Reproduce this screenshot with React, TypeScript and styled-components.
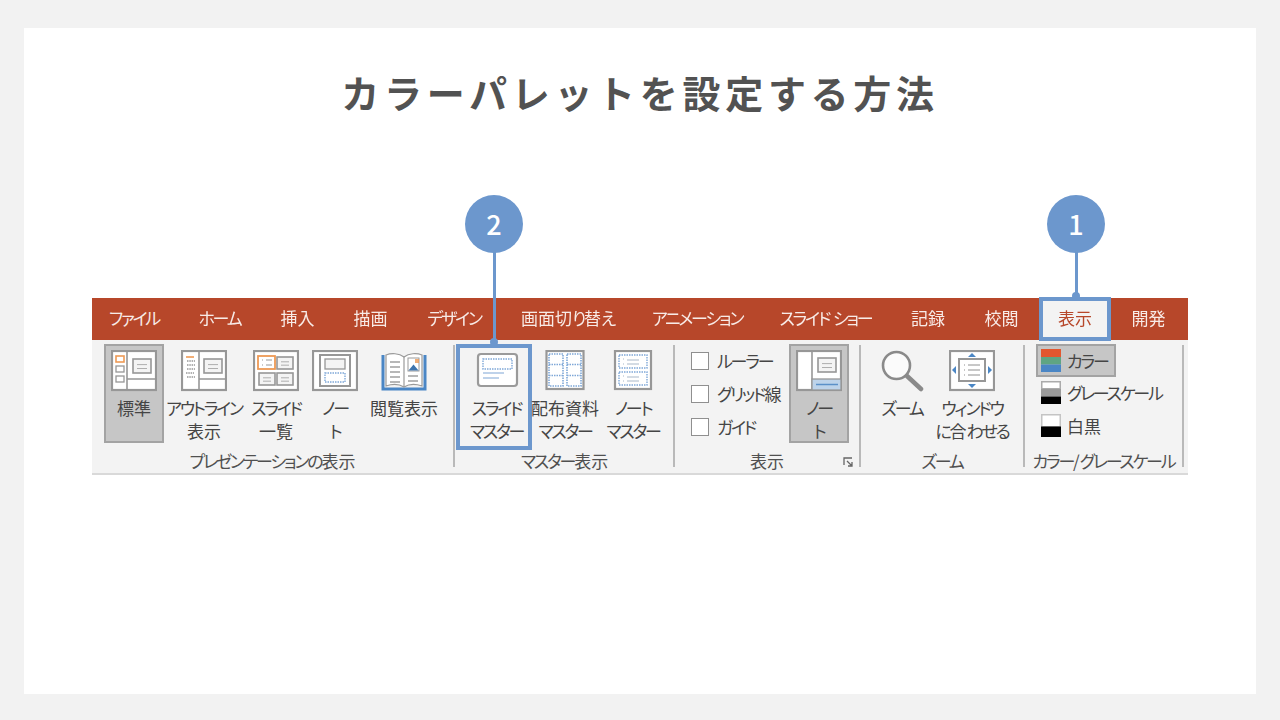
import React from "react";
import styled, { createGlobalStyle } from "styled-components";

const FONT = `"Noto Sans CJK JP", "Noto Sans", sans-serif`;
const BLUE = "#6c97cd";
const GRAY = "#979797";
const DOT = "#7fa8d8";
const ORANGE = "#ee9a55";

const Global = createGlobalStyle`
  html, body { margin: 0; padding: 0; background: #f2f2f2; }
  * { box-sizing: border-box; }
`;

const Page = styled.div`
  width: 1280px;
  height: 720px;
  padding: 28px 24px 26px;
  font-family: ${FONT};
`;
const Card = styled.main`
  height: 666px;
  background: #fff;
  padding: 39px 68px 0;
`;
const Title = styled.h1`
  margin: 0 0 181px;
  height: 50px;
  line-height: 50px;
  text-align: center;
  font-size: 38px;
  font-weight: 700;
  letter-spacing: 4.7px;
  color: #525252;
`;
const RibbonWrap = styled.section`
  position: relative;
  width: 1096px;
  font-feature-settings: "palt";
  color: #454545;
`;
const Blurred = styled.div`
  filter: blur(0.5px);
`;
const TabBar = styled.nav`
  display: flex;
  gap: 4px;
  height: 42px;
  background: #b7472a;
`;
const Tab = styled.div<{ $w: number; $active?: boolean }>`
  position: relative;
  z-index: 1;
  width: ${(p) => p.$w + 34}px;
  flex: none;
  height: 42px;
  line-height: 40px;
  font-size: 17px;
  text-align: center;
  white-space: nowrap;
  color: ${(p) => (p.$active ? "#b7472a" : "#f8ebe7")};
  background: ${(p) => (p.$active ? "#f3f3f3" : "transparent")};
  box-shadow: ${(p) => (p.$active ? `inset 0 0 0 3px ${BLUE}, 0 0 0 1px ${BLUE}` : "none")};
`;
const Kana = styled.span`
  letter-spacing: -2.2px;
`;
const Ribbon = styled.div`
  display: flex;
  height: 135px;
  padding-top: 4px;
  background: #f3f3f3;
  border-bottom: 2px solid #d9d9d9;
`;
const Group = styled.div<{ $w: number; $pl?: number }>`
  position: relative;
  width: ${(p) => p.$w}px;
  padding-left: ${(p) => p.$pl ?? 0}px;
  display: flex;
  flex-direction: column;
`;
const Row = styled.div`
  display: flex;
  height: 106px;
`;
const GroupLabel = styled.div<{ $ml?: number }>`
  height: 22px;
  line-height: 22px;
  margin-left: ${(p) => p.$ml ?? 0}px;
  font-size: 17px;
  text-align: center;
  white-space: nowrap;
  color: #505050;
`;
const Sep = styled.div`
  width: 2px;
  height: 122px;
  margin-top: 1px;
  background: #b9b9b9;
  flex: none;
`;
const BigButton = styled.div<{ $w: number; $active?: boolean; $marked?: boolean }>`
  width: ${(p) => p.$w}px;
  height: ${(p) => (p.$marked ? 106 : 99)}px;
  flex: none;
  display: flex;
  flex-direction: column;
  align-items: center;
  border: 2px solid ${(p) => (p.$marked ? BLUE : p.$active ? "#a3a3a3" : "transparent")};
  background: ${(p) => (p.$active ? "#c6c6c6" : "transparent")};
  padding-left: ${(p) => (p.$marked ? 5 : 0)}px;
  box-shadow: ${(p) => (p.$marked ? `inset 0 0 0 2px ${BLUE}` : "none")};
`;
const IconSlot = styled.div`
  height: 50px;
  padding-top: 4px;
  flex: none;
`;
const BigText = styled.div`
  font-size: 17px;
  line-height: 23px;
  text-align: center;
  white-space: pre;
`;
const CheckColumn = styled.div`
  width: 98px;
  flex: none;
`;
const CheckRow = styled.div`
  height: 33px;
  display: flex;
  align-items: center;
  gap: 8px;
  font-size: 17px;
  white-space: nowrap;
`;
const CheckBox = styled.span`
  width: 18px;
  height: 18px;
  background: #fff;
  border: 1.5px solid #8f8f8f;
  flex: none;
`;
const Launcher = styled.svg`
  position: absolute;
  right: 5px;
  bottom: 5px;
`;
const ColorRow = styled.div<{ $active?: boolean }>`
  width: 80px;
  height: 32.5px;
  display: flex;
  align-items: center;
  gap: 6px;
  padding-left: 3px;
  font-size: 17px;
  white-space: nowrap;
  border: 2px solid ${(p) => (p.$active ? "#a3a3a3" : "transparent")};
  background: ${(p) => (p.$active ? "#c6c6c6" : "transparent")};
`;
const ColorColumn = styled.div`
  display: flex;
  flex-direction: column;
`;
const Swatch = styled.svg`
  flex: none;
`;
const Pin = styled.div<{ $x: number; $stem: number }>`
  position: absolute;
  z-index: 2;
  left: ${(p) => p.$x}px;
  top: -103px;
  width: 58px;
  height: ${(p) => 57 + p.$stem}px;
  transform: translateX(-50%);
  &::before {
    content: "";
    position: absolute;
    left: 27.5px;
    top: 50px;
    width: 3px;
    height: ${(p) => p.$stem + 7}px;
    background: ${BLUE};
  }
  &::after {
    content: "";
    position: absolute;
    left: 25px;
    bottom: -2px;
    width: 8px;
    height: 8px;
    border-radius: 50%;
    background: ${BLUE};
  }
`;
const PinBadge = styled.div`
  position: relative;
  width: 58px;
  height: 58px;
  border-radius: 50%;
  background: ${BLUE};
  color: #fff;
  font-size: 27px;
  font-weight: 500;
  line-height: 58px;
  text-align: center;
  font-feature-settings: normal;
`;

const K = ({ t }: { t: string }) => (
  <>
    {t.split(/([ァ-ヶーぁ-ん]+)/).map((s, i) => (i % 2 ? <Kana key={i}>{s}</Kana> : s))}
  </>
);

const Ic = ({ children }: { children: React.ReactNode }) => (
  <svg width="46" height="42" viewBox="0 0 46 42" fill="none">{children}</svg>
);
const Frame = () => <rect x="1" y="1" width="44" height="39" fill="#fff" stroke={GRAY} strokeWidth="2.2" />;
const MiniSlide = ({ x, y, w = 18, h = 14 }: { x: number; y: number; w?: number; h?: number }) => (
  <g stroke={GRAY}>
    <rect x={x} y={y} width={w} height={h} fill="#f4f4f4" strokeWidth="1.6" />
    <path d={`M${x + 4} ${y + h * 0.4}h${w - 8}M${x + 4} ${y + h * 0.68}h${w - 8}`} strokeWidth="1" opacity=".75" />
  </g>
);
const NormalIcon = () => (
  <Ic>
    <Frame />
    <path d="M16 1v39M16 29h29" stroke={GRAY} strokeWidth="1.6" />
    <rect x="5" y="6" width="8" height="6" stroke={ORANGE} strokeWidth="1.6" />
    <rect x="5" y="16" width="8" height="6" stroke={GRAY} strokeWidth="1.3" />
    <rect x="5" y="26" width="8" height="6" stroke={GRAY} strokeWidth="1.3" />
    <MiniSlide x={22} y={9} />
  </Ic>
);
const OutlineIcon = () => (
  <Ic>
    <Frame />
    <path d="M18 1v39M18 29h27" stroke={GRAY} strokeWidth="1.6" />
    <path d="M5 7h8" stroke={ORANGE} strokeWidth="1.6" />
    <path d="M6 11h8M6 15h8M6 19h8M5 23h8M6 27h8" stroke={GRAY} strokeWidth="1.3" strokeDasharray="1.5 .8" />
    <MiniSlide x={23} y={9} />
  </Ic>
);
const SorterIcon = () => (
  <Ic>
    <Frame />
    <MiniSlide x={24} y={7} w={16} h={12} />
    <MiniSlide x={6} y={23} w={16} h={12} />
    <MiniSlide x={24} y={23} w={16} h={12} />
    <rect x="5" y="6" width="17" height="13" fill="#fff" stroke={ORANGE} strokeWidth="1.8" />
    <path d="M9 10h1M9 15h1M13 10h6M13 15h6" stroke={GRAY} strokeWidth="1" />
  </Ic>
);
const NotesIcon = () => (
  <Ic>
    <Frame />
    <rect x="8" y="5" width="30" height="31" stroke={GRAY} strokeWidth="2" />
    <rect x="13" y="9" width="20" height="10" fill="#f4f4f4" stroke={GRAY} strokeWidth="1.3" />
    <rect x="13" y="23" width="20" height="9" stroke={DOT} strokeWidth="1.4" strokeDasharray="1.5 1" />
  </Ic>
);
const ReadingIcon = () => (
  <Ic>
    <path d="M2 5v34h42V5" stroke="#4a86c5" strokeWidth="3" />
    <path d="M23 7C18 3 10 3 5 5v31c6-2 13-2 18 1 5-3 12-3 18-1V5c-5-2-13-2-18 2Z" fill="#fff" stroke="#9a9a9a" strokeWidth="1.2" />
    <path d="M23 7v30" stroke="#9a9a9a" strokeWidth="1.2" />
    <path d="M9 12h10M9 17h10M9 22h10M9 27h10M9 32h10M27 26h10M27 31h10" stroke="#a0a0a0" strokeWidth="1.3" />
    <rect x="27" y="8" width="11" height="13" fill="#fff" stroke="#9a9a9a" />
    <path d="M27.5 20.5l5-6 5 6Z" fill="#3e74ad" />
    <path d="M34 9h4v4h-4Z" fill={ORANGE} opacity=".8" />
  </Ic>
);
const SlideMasterIcon = () => (
  <Ic>
    <rect x="4" y="4" width="39" height="32" rx="3" fill="#fff" stroke="#9a9a9a" strokeWidth="2.2" />
    <rect x="9" y="9" width="29" height="10" stroke={DOT} strokeWidth="1.4" strokeDasharray="1.5 1" />
    <path d="M9 23h21M9 28h16" stroke="#a9c4e4" strokeWidth="1.6" />
  </Ic>
);
const HandoutIcon = () => (
  <Ic>
    <rect x="4.500" y="1" width="37" height="38" fill="#fff" stroke={GRAY} strokeWidth="2.2" />
    <path
      d="M7 4h14v32H7ZM25 4h14v32H25ZM7 14.500h14M7 25.500h14M25 14.500h14M25 25.500h14"
      stroke={DOT}
      strokeWidth="1.6"
      strokeDasharray="1.5 1"
    />
  </Ic>
);
const NotesMasterIcon = () => (
  <Ic>
    <rect x="5" y="1" width="36" height="38" fill="#fff" stroke={GRAY} strokeWidth="2.2" />
    <rect x="9" y="5" width="28" height="13" stroke={DOT} strokeWidth="1.4" strokeDasharray="1.5 1" />
    <rect x="9" y="22" width="28" height="13" stroke={DOT} strokeWidth="1.4" strokeDasharray="1.5 1" />
    <path d="M13 9h1M17 10h12M13 14h1M17 14h12M13 26h1M17 27h12M13 31h1M17 31h12" stroke="#a9b8c9" strokeWidth="1" />
  </Ic>
);
const NoteViewIcon = () => (
  <Ic>
    <Frame />
    <path d="M16 1v39" stroke={GRAY} strokeWidth="1.6" />
    <rect x="16" y="29" width="29" height="11" fill="#bdd3ea" stroke={GRAY} strokeWidth="1.3" />
    <path d="M20 34.500h22" stroke="#5b90c8" strokeWidth="1.5" />
    <MiniSlide x={22} y={8} />
  </Ic>
);
const ZoomIcon = () => (
  <Ic>
    <circle cx="17.500" cy="15.500" r="13.500" fill="#fbfbfb" stroke="#8a8a8a" strokeWidth="2.6" />
    <path d="M28 26l14 13" stroke="#8a8a8a" strokeWidth="4.500" strokeLinecap="round" />
  </Ic>
);
const FitIcon = () => (
  <Ic>
    <Frame />
    <rect x="10" y="9" width="26" height="22" fill="#fff" stroke={GRAY} strokeWidth="2" />
    <path d="M15 15h1M19 15h12M15 20h1M19 20h12M15 25h1M19 25h12" stroke="#909090" strokeWidth="1" />
    <path d="M23 3l4 4h-8ZM23 38l4-4h-8ZM3 20l4-4v8ZM43 20l-4-4v8Z" fill="#4a86c5" />
  </Ic>
);
const ColorSwatch = () => (
  <Swatch width="20" height="23" viewBox="0 0 20 23">
    <rect width="20" height="8" fill="#e2572f" />
    <rect y="8" width="20" height="7.500" fill="#5fa583" />
    <rect y="15.500" width="20" height="7.500" fill="#4a86c5" />
  </Swatch>
);
const GraySwatch = () => (
  <Swatch width="20" height="23" viewBox="0 0 20 23">
    <rect x=".75" y=".75" width="18.500" height="7" fill="#fff" stroke="#ababab" strokeWidth="1.500" />
    <rect y="8" width="20" height="7.500" fill="#9a9a9a" />
    <rect y="15.500" width="20" height="7.500" fill="#000" />
  </Swatch>
);
const MonoSwatch = () => (
  <Swatch width="20" height="23" viewBox="0 0 20 23">
    <rect x=".75" y=".75" width="18.500" height="12" fill="#fff" stroke="#c4c4c4" strokeWidth="1.500" />
    <rect y="12.500" width="20" height="10.500" fill="#000" />
  </Swatch>
);

const tabs: [string, number][] = [
  ["ファイル", 50], ["ホーム", 45], ["挿入", 35], ["描画", 35], ["デザイン", 56], ["画面切り替え", 95],
  ["アニメーション", 88], ["スライド ショー", 93], ["記録", 36], ["校閲", 35], ["表示", 36], ["開発", 35],
];

export default function App() {
  return (
    <Page>
      <Global />
      <Card>
        <Title>カラーパレットを設定する方法</Title>
        <RibbonWrap>
          <Blurred>
            <TabBar>
              {tabs.map(([t, w]) => (
                <Tab key={t} $w={w} $active={t === "表示"}><K t={t} /></Tab>
              ))}
            </TabBar>
            <Ribbon>
              <Group $w={361} $pl={12}>
                <Row>
                  <BigButton $w={60} $active><IconSlot><NormalIcon /></IconSlot><BigText>標準</BigText></BigButton>
                  <BigButton $w={80}><IconSlot><OutlineIcon /></IconSlot><BigText><K t={"アウトライン\n表示"} /></BigText></BigButton>
                  <BigButton $w={64}><IconSlot><SorterIcon /></IconSlot><BigText><K t={"スライド\n一覧"} /></BigText></BigButton>
                  <BigButton $w={54}><IconSlot><NotesIcon /></IconSlot><BigText><K t={"ノー\nト"} /></BigText></BigButton>
                  <BigButton $w={84}><IconSlot><ReadingIcon /></IconSlot><BigText>閲覧表示</BigText></BigButton>
                </Row>
                <GroupLabel $ml={-12}><K t="プレゼンテーションの表示" /></GroupLabel>
              </Group>
              <Sep />
              <Group $w={218} $pl={1}>
                <Row>
                  <BigButton $w={76} $marked><IconSlot><SlideMasterIcon /></IconSlot><BigText><K t={"スライド\nマスター"} /></BigText></BigButton>
                  <BigButton $w={66}><IconSlot><HandoutIcon /></IconSlot><BigText><K t={"配布資料\nマスター"} /></BigText></BigButton>
                  <BigButton $w={70}><IconSlot><NotesMasterIcon /></IconSlot><BigText><K t={"ノート\nマスター"} /></BigText></BigButton>
                </Row>
                <GroupLabel><K t="マスター表示" /></GroupLabel>
              </Group>
              <Sep />
              <Group $w={184} $pl={16}>
                <Row>
                  <CheckColumn>
                    <CheckRow><CheckBox /><span><K t="ルーラー" /></span></CheckRow>
                    <CheckRow><CheckBox /><span><K t="グリッド線" /></span></CheckRow>
                    <CheckRow><CheckBox /><span><K t="ガイド" /></span></CheckRow>
                  </CheckColumn>
                  <BigButton $w={60} $active><IconSlot><NoteViewIcon /></IconSlot><BigText><K t={"ノー\nト"} /></BigText></BigButton>
                </Row>
                <GroupLabel $ml={-16}>表示</GroupLabel>
                <Launcher width="11" height="11" viewBox="0 0 11 11" fill="none">
                  <path d="M1 8V1h8M4 4l5 5M9 5v4H5" stroke="#666" strokeWidth="1.3" />
                </Launcher>
              </Group>
              <Sep />
              <Group $w={162}>
                <Row>
                  <BigButton $w={82}><IconSlot><ZoomIcon /></IconSlot><BigText><K t="ズーム" /></BigText></BigButton>
                  <BigButton $w={58}><IconSlot><FitIcon /></IconSlot><BigText><K t={"ウィンドウ\nに合わせる"} /></BigText></BigButton>
                </Row>
                <GroupLabel><K t="ズーム" /></GroupLabel>
              </Group>
              <Sep />
              <Group $w={157} $pl={11}>
                <Row>
                  <ColorColumn>
                    <ColorRow $active><ColorSwatch /><span><K t="カラー" /></span></ColorRow>
                    <ColorRow><GraySwatch /><span><K t="グレースケール" /></span></ColorRow>
                    <ColorRow><MonoSwatch />白黒</ColorRow>
                  </ColorColumn>
                </Row>
                <GroupLabel $ml={-11}><K t="カラー/グレースケール" /></GroupLabel>
              </Group>
              <Sep />
            </Ribbon>
          </Blurred>
          <Pin $x={402} $stem={46 + 46}><PinBadge>2</PinBadge></Pin>
          <Pin $x={984} $stem={46}><PinBadge>1</PinBadge></Pin>
        </RibbonWrap>
      </Card>
    </Page>
  );
}
